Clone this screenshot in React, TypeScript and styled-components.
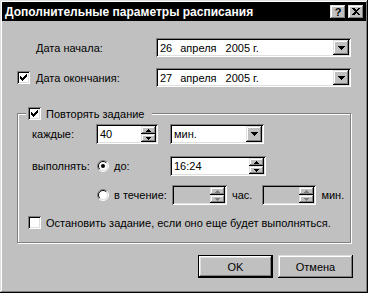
import React from 'react';
import styled, { createGlobalStyle, css } from 'styled-components';

const GlobalStyle = createGlobalStyle`
  html, body {
    margin: 0;
    padding: 0;
    background: #c0c0c0;
  }
  body {
    font-family: "Liberation Sans", Arial, sans-serif;
    font-size: 11px;
    color: #000;
  }
`;

const sunken = css`
  box-shadow: inset 1px 1px #808080, inset -1px -1px #fff, inset 2px 2px #000, inset -2px -2px #dfdfdf;
`;

const raised = css`
  box-shadow: inset -1px -1px #000, inset 1px 1px #dfdfdf, inset -2px -2px #808080, inset 2px 2px #fff;
`;

const Window = styled.div`
  width: 368px;
  height: 293px;
  box-sizing: border-box;
  padding: 2px;
  background: #c0c0c0;
  ${raised}
  display: flex;
  flex-direction: column;
`;

const TitleBar = styled.div`
  height: 19px;
  background: #000;
  display: flex;
  align-items: center;
  padding: 0 2px 0 3px;
`;

const Title = styled.div`
  flex: 1;
  color: #fff;
  font-weight: bold;
  font-size: 12px;
`;

const TitleButton = styled.div`
  width: 16px;
  height: 14px;
  background: #c0c0c0;
  ${raised}
  display: flex;
  align-items: center;
  justify-content: center;
  font-weight: bold;
  font-size: 11px;
  & + & {
    margin-left: 2px;
  }
`;

const Body = styled.div`
  padding: 17px 0 0 15px;
  display: flex;
  flex-direction: column;
`;

const DateRow = styled.div<{ $top: number }>`
  display: flex;
  align-items: center;
  height: 19px;
  margin-top: ${(p) => p.$top}px;
`;

const CheckSlot = styled.div`
  width: 19px;
  display: flex;
`;

const DateLabel = styled.div`
  width: 120px;
`;

const Combo = styled.div<{ $w: number; $h?: number }>`
  width: ${(p) => p.$w}px;
  height: ${(p) => p.$h || 19}px;
  box-sizing: border-box;
  padding: 2px;
  background: #fff;
  ${sunken}
  display: flex;
  flex: none;
`;

const FieldText = styled.div`
  flex: 1;
  display: flex;
  align-items: center;
  padding-left: 2px;
  white-space: pre;
`;

const Gap = styled.span<{ $w: number }>`
  display: inline-block;
  width: ${(p) => p.$w}px;
`;

const DropButton = styled.div`
  width: 16px;
  background: #c0c0c0;
  ${raised}
  display: flex;
  align-items: center;
  justify-content: center;
`;

const Box = styled.div`
  width: 13px;
  height: 13px;
  box-sizing: border-box;
  background: #fff;
  ${sunken}
  position: relative;
  flex: none;
`;

const Group = styled.fieldset`
  margin: 20px 0 0 0;
  width: 334px;
  box-sizing: border-box;
  border: 1px solid #808080;
  box-shadow: 1px 1px 0 #fff, inset 1px 1px 0 #fff;
  padding: 4px 0 13px 14px;
  min-inline-size: 0;
`;

const Legend = styled.legend`
  margin-left: -6px;
  padding: 0 8px 0 2px;
  height: 13px;
  display: flex;
  align-items: center;
  background: #c0c0c0;
`;

const BoxLabel = styled.span`
  margin-left: 5px;
`;

const GroupRow = styled.div<{ $top: number; $h?: number; $shift?: number }>`
  display: flex;
  align-items: center;
  height: ${(p) => p.$h || 20}px;
  margin-top: ${(p) => p.$top}px;
  margin-left: ${(p) => p.$shift || 0}px;
`;

const RowLabel = styled.div<{ $w: number }>`
  width: ${(p) => p.$w}px;
  flex: none;
`;

const Spin = styled.div<{ $w: number; $disabled?: boolean; $left?: number }>`
  width: ${(p) => p.$w}px;
  height: 20px;
  box-sizing: border-box;
  padding: 2px;
  margin-left: ${(p) => p.$left || 0}px;
  background: ${(p) => (p.$disabled ? '#c0c0c0' : '#fff')};
  ${sunken}
  display: flex;
  flex: none;
`;

const SpinColumn = styled.div`
  width: 15px;
  display: flex;
  flex-direction: column;
`;

const SpinButton = styled.div`
  flex: 1;
  background: #c0c0c0;
  ${raised}
  display: flex;
  align-items: center;
  justify-content: center;
`;

const Radio = styled.div`
  width: 12px;
  height: 12px;
  margin-left: 1px;
  flex: none;
  display: flex;
`;

const Choice = styled.div<{ $w: number }>`
  width: ${(p) => p.$w}px;
  display: flex;
  align-items: center;
  flex: none;
`;

const ChoiceText = styled.span`
  margin-left: 5px;
`;

const Unit = styled.span<{ $left: number }>`
  margin-left: ${(p) => p.$left}px;
`;

const ButtonRow = styled.div`
  display: flex;
  justify-content: flex-end;
  gap: 5px;
  margin: 12px 0 0 0;
  padding-right: 13px;
`;

const Button = styled.div<{ $default?: boolean }>`
  width: 75px;
  height: 23px;
  box-sizing: border-box;
  display: flex;
  align-items: center;
  justify-content: center;
  background: #c0c0c0;
  ${(p) =>
    p.$default
      ? css`
          box-shadow: inset 0 0 0 1px #000, inset -2px -2px #000, inset 2px 2px #fff, inset -3px -3px #808080, inset 3px 3px #dfdfdf;
        `
      : raised}
`;

const Arrow = ({ up, color = '#000', small }: { up?: boolean; color?: string; small?: boolean }) => {
  const w = small ? 5 : 7;
  const h = small ? 3 : 4;
  return (
    <svg width={w} height={h} viewBox={`0 0 ${w} ${h}`} shapeRendering="crispEdges">
      <polygon points={up ? `0,${h} ${w},${h} ${w / 2},0` : `0,0 ${w},0 ${w / 2},${h}`} fill={color} />
    </svg>
  );
};

const Check = ({ checked }: { checked?: boolean }) => (
  <Box>
    {checked && (
      <svg width="7" height="7" viewBox="0 0 7 7" style={{ position: 'absolute', left: 3, top: 3 }} shapeRendering="crispEdges">
        {[2, 3, 4, 3, 2, 1, 0].map((y, x) => (
          <rect key={x} x={x} y={y} width="1" height="3" fill="#000" />
        ))}
      </svg>
    )}
  </Box>
);

const RadioMark = ({ on }: { on?: boolean }) => (
  <Radio>
    <svg width="12" height="12" viewBox="0 0 12 12">
      <circle cx="6" cy="6" r="5" fill="#fff" />
      <path d="M2.1 9.9 A5.5 5.5 0 0 1 9.9 2.1" stroke="#808080" fill="none" strokeWidth="1" />
      <path d="M9.9 2.1 A5.5 5.5 0 0 1 2.1 9.9" stroke="#fff" fill="none" strokeWidth="1" />
      <path d="M2.8 9.2 A4.5 4.5 0 0 1 9.2 2.8" stroke="#000" fill="none" strokeWidth="1" />
      <path d="M9.2 2.8 A4.5 4.5 0 0 1 2.8 9.2" stroke="#dfdfdf" fill="none" strokeWidth="1" />
      {on && <circle cx="6" cy="6" r="2" fill="#000" />}
    </svg>
  </Radio>
);

const SpinField = ({ w, value, disabled, left }: { w: number; value?: string; disabled?: boolean; left?: number }) => (
  <Spin $w={w} $disabled={disabled} $left={left}>
    <FieldText>{value}</FieldText>
    <SpinColumn>
      <SpinButton>
        <Arrow up small color={disabled ? '#808080' : '#000'} />
      </SpinButton>
      <SpinButton>
        <Arrow small color={disabled ? '#808080' : '#000'} />
      </SpinButton>
    </SpinColumn>
  </Spin>
);

const DateCombo = ({ day }: { day: string }) => (
  <Combo $w={195}>
    <FieldText>
      {day}
      <Gap $w={8} />
      апреля
      <Gap $w={9} />
      2005 г.
    </FieldText>
    <DropButton>
      <Arrow />
    </DropButton>
  </Combo>
);

const App = () => {
  return (
    <>
      <GlobalStyle />
      <Window>
        <TitleBar>
          <Title>Дополнительные параметры расписания</Title>
          <TitleButton>?</TitleButton>
          <TitleButton>
            <svg width="8" height="7" viewBox="0 0 8 7" shapeRendering="crispEdges">
              <path d="M0 0h2l2 2 2-2h2L5 3.5 8 7H6L4 5 2 7H0l3-3.5z" fill="#000" />
            </svg>
          </TitleButton>
        </TitleBar>
        <Body>
          <DateRow $top={0}>
            <CheckSlot />
            <DateLabel>Дата начала:</DateLabel>
            <DateCombo day="26" />
          </DateRow>
          <DateRow $top={11}>
            <CheckSlot>
              <Check checked />
            </CheckSlot>
            <DateLabel>Дата окончания:</DateLabel>
            <DateCombo day="27" />
          </DateRow>
          <Group>
            <Legend>
              <Check checked />
              <BoxLabel>Повторять задание</BoxLabel>
            </Legend>
            <GroupRow $top={0}>
              <RowLabel $w={64}>каждые:</RowLabel>
              <SpinField w={62} value="40" />
              <Combo $w={94} $h={20} style={{ marginLeft: 12 }}>
                <FieldText>мин.</FieldText>
                <DropButton>
                  <Arrow />
                </DropButton>
              </Combo>
            </GroupRow>
            <GroupRow $top={12}>
              <RowLabel $w={64}>выполнять:</RowLabel>
              <Choice $w={74}>
                <RadioMark on />
                <ChoiceText>до:</ChoiceText>
              </Choice>
              <SpinField w={96} value="16:24" />
            </GroupRow>
            <GroupRow $top={9}>
              <RowLabel $w={64} />
              <Choice $w={76}>
                <RadioMark />
                <ChoiceText>в течение:</ChoiceText>
              </Choice>
              <SpinField w={55} disabled />
              <Unit $left={5}>час.</Unit>
              <SpinField w={54} disabled left={10} />
              <Unit $left={5}>мин.</Unit>
            </GroupRow>
            <GroupRow $top={11} $h={13} $shift={-4}>
              <Check />
              <BoxLabel>Остановить задание, если оно еще будет выполняться.</BoxLabel>
            </GroupRow>
          </Group>
          <ButtonRow>
            <Button $default>OK</Button>
            <Button>Отмена</Button>
          </ButtonRow>
        </Body>
      </Window>
    </>
  );
};

export default App;
